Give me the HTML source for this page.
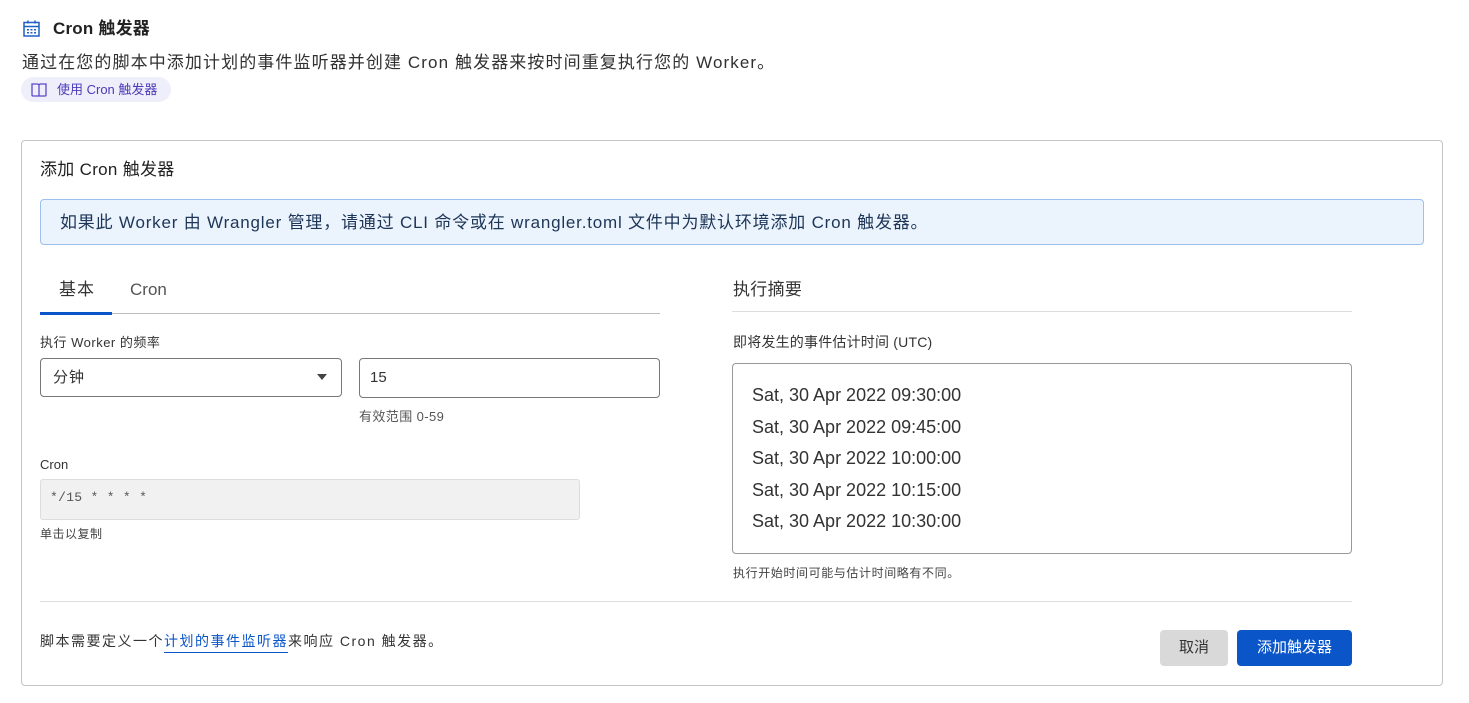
<!DOCTYPE html>
<html><head><meta charset="utf-8"><style>
*{box-sizing:border-box;margin:0;padding:0}
body{width:1469px;height:703px;background:#fff;font-family:"Liberation Sans","Noto Sans CJK SC",sans-serif;color:#313131;position:relative;overflow:hidden}
.a{position:absolute;white-space:nowrap;line-height:1.2}
</style></head><body>
<svg class="a" style="left:22px;top:19px" width="19" height="19" viewBox="0 0 19 19" fill="none" stroke="#1f5fc8" stroke-width="1.5"><rect x="2" y="3.5" width="15" height="13.5"/><line x1="2" y1="7.5" x2="17" y2="7.5"/><line x1="6" y1="1.5" x2="6" y2="4.5"/><line x1="13" y1="1.5" x2="13" y2="4.5"/><g fill="#1f5fc8" stroke="none"><rect x="5" y="10" width="2" height="1.5"/><rect x="8.5" y="10" width="2" height="1.5"/><rect x="12" y="10" width="2" height="1.5"/><rect x="5" y="13" width="2" height="1.5"/><rect x="8.5" y="13" width="2" height="1.5"/><rect x="12" y="13" width="2" height="1.5"/></g></svg>
<div class="a" style="left:53px;top:19px;font-size:17px;font-weight:bold;color:#222;letter-spacing:0.2px">Cron 触发器</div>
<div class="a" style="left:22px;top:53px;font-size:17px;color:#313131;letter-spacing:1.1px">通过在您的脚本中添加计划的事件监听器并创建 Cron 触发器来按时间重复执行您的 Worker。</div>
<div class="a" style="left:21px;top:77px;width:150px;height:25px;border-radius:13px;background:#efeefb"></div>
<svg class="a" style="left:31px;top:83px" width="16" height="14" viewBox="0 0 16 14" fill="none" stroke="#5a48c8" stroke-width="1.3"><path d="M1 1h5.5c.8 0 1.5.7 1.5 1.5V13H2c-.6 0-1-.4-1-1zM8 2.5C8 1.7 8.7 1 9.5 1H15v11c0 .6-.4 1-1 1H8"/></svg>
<div class="a" style="left:57px;top:82px;font-size:13px;color:#4a3bb8">使用 Cron 触发器</div>

<div class="a" style="left:21px;top:140px;width:1422px;height:546px;border:1px solid #c4c4c4;border-radius:4px"></div>
<div class="a" style="left:40px;top:160px;font-size:17px;color:#222;letter-spacing:0.3px">添加 Cron 触发器</div>
<div class="a" style="left:40px;top:199px;width:1384px;height:46px;background:#ebf3fd;border:1px solid #9cc0ee;border-radius:4px"></div>
<div class="a" style="left:60px;top:213px;font-size:17px;color:#1d3557;letter-spacing:0.8px">如果此 Worker 由 Wrangler 管理，请通过 CLI 命令或在 wrangler.toml 文件中为默认环境添加 Cron 触发器。</div>

<div class="a" style="left:59px;top:280px;font-size:17px;color:#333;letter-spacing:1px">基本</div>
<div class="a" style="left:130px;top:280px;font-size:17px;color:#555">Cron</div>
<div class="a" style="left:40px;top:313px;width:620px;height:1px;background:#bbb"></div>
<div class="a" style="left:40px;top:312px;width:72px;height:3px;background:#0a55c8"></div>

<div class="a" style="left:40px;top:335px;font-size:13px;color:#333;letter-spacing:0.5px">执行 Worker 的频率</div>
<div class="a" style="left:40px;top:358px;width:302px;height:39px;border:1px solid #777;border-radius:4px"></div>
<div class="a" style="left:53px;top:369px;font-size:15px;color:#333;letter-spacing:1px">分钟</div>
<div class="a" style="left:317px;top:374px;width:0;height:0;border-left:5px solid transparent;border-right:5px solid transparent;border-top:6px solid #444"></div>
<div class="a" style="left:359px;top:358px;width:301px;height:40px;border:1px solid #777;border-radius:4px"></div>
<div class="a" style="left:370px;top:369px;font-size:15px;color:#333">15</div>
<div class="a" style="left:359px;top:409px;font-size:13px;color:#555;letter-spacing:0.4px">有效范围 0-59</div>

<div class="a" style="left:40px;top:457px;font-size:13px;color:#333">Cron</div>
<div class="a" style="left:40px;top:479px;width:540px;height:41px;background:#f1f1f1;border:1px solid #ddd;border-radius:3px"></div>
<div class="a" style="left:50px;top:490px;font-family:'Liberation Mono',monospace;font-size:13px;color:#555;letter-spacing:0.3px">*/15 * * * *</div>
<div class="a" style="left:40px;top:527px;font-size:12px;color:#444;letter-spacing:0.5px">单击以复制</div>

<div class="a" style="left:733px;top:280px;font-size:17px;color:#333;letter-spacing:0.3px">执行摘要</div>
<div class="a" style="left:732px;top:311px;width:620px;height:1px;background:#ddd"></div>
<div class="a" style="left:733px;top:334px;font-size:14px;color:#333;letter-spacing:0.2px">即将发生的事件估计时间 (UTC)</div>
<div class="a" style="left:732px;top:363px;width:620px;height:191px;border:1px solid #999;border-radius:4px"></div>
<div class="a" style="left:752px;top:380px;font-size:18px;line-height:31.5px;color:#333">Sat, 30 Apr 2022 09:30:00<br>Sat, 30 Apr 2022 09:45:00<br>Sat, 30 Apr 2022 10:00:00<br>Sat, 30 Apr 2022 10:15:00<br>Sat, 30 Apr 2022 10:30:00</div>
<div class="a" style="left:733px;top:566px;font-size:12px;color:#444;letter-spacing:0.6px">执行开始时间可能与估计时间略有不同。</div>

<div class="a" style="left:40px;top:633px;font-size:14px;color:#333;letter-spacing:1.5px">脚本需要定义一个<span style="color:#0a55c8;border-bottom:1px solid #0a55c8;padding-bottom:3px">计划的事件监听器</span>来响应 Cron 触发器。</div>
<div class="a" style="left:40px;top:601px;width:1312px;height:1px;background:#ddd"></div>
<div class="a" style="left:1160px;top:630px;width:68px;height:36px;background:#d9d9d9;border-radius:4px;font-size:15px;color:#333;text-align:center;line-height:36px">取消</div>
<div class="a" style="left:1237px;top:630px;width:115px;height:36px;background:#0a55c8;border-radius:4px;font-size:15px;color:#fff;text-align:center;line-height:36px">添加触发器</div>
</body></html>
